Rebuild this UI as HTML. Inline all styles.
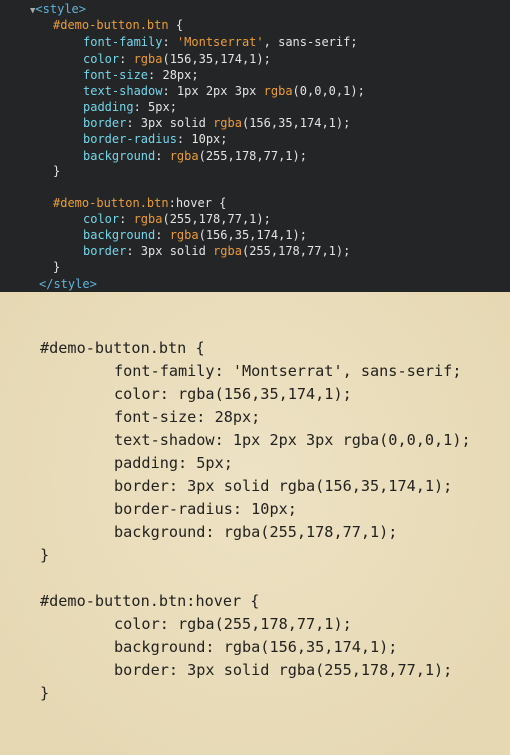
<!DOCTYPE html>
<html><head><style>
body{margin:0;width:510px;height:755px;overflow:hidden;font-family:"DejaVu Sans Mono","Liberation Mono",monospace;}
#top{position:absolute;left:0;top:0;width:510px;height:292px;background:#242526;font-size:12px;}
#bot{position:absolute;left:0;top:292px;width:510px;height:463px;background:radial-gradient(ellipse at 50% 40%,#ede2c4,#e6d8b3 85%);font-size:15.2px;color:#232220;}
.l{position:absolute;white-space:pre;line-height:16px;}
#bot .l{line-height:20px;}
.t{color:#5fb4dc}.s{color:#ea9d3a}.p{color:#74d6ea}.v{color:#e3e3e3}.o{color:#ea9d3a}
</style></head><body>
<div id="top">
<div class="l" style="left:30px;top:1px"><span style="color:#aaa;font-size:9px">▼</span><span class="t">&lt;style&gt;</span></div>
<div class="l s" style="left:53px;top:17px">#demo-button.btn <span class="v">{</span></div>
<div class="l" style="left:83px;top:34px"><span class="p">font-family</span><span class="v">: </span><span class="o">'Montserrat'</span><span class="v">, sans-serif;</span></div>
<div class="l" style="left:83px;top:51px"><span class="p">color</span><span class="v">: </span><span class="o">rgba</span><span class="v">(156,35,174,1);</span></div>
<div class="l" style="left:83px;top:67px"><span class="p">font-size</span><span class="v">: 28px;</span></div>
<div class="l" style="left:83px;top:83px"><span class="p">text-shadow</span><span class="v">: 1px 2px 3px </span><span class="o">rgba</span><span class="v">(0,0,0,1);</span></div>
<div class="l" style="left:83px;top:99px"><span class="p">padding</span><span class="v">: 5px;</span></div>
<div class="l" style="left:83px;top:115px"><span class="p">border</span><span class="v">: 3px solid </span><span class="o">rgba</span><span class="v">(156,35,174,1);</span></div>
<div class="l" style="left:83px;top:131px"><span class="p">border-radius</span><span class="v">: 10px;</span></div>
<div class="l" style="left:83px;top:148px"><span class="p">background</span><span class="v">: </span><span class="o">rgba</span><span class="v">(255,178,77,1);</span></div>
<div class="l v" style="left:53px;top:163px">}</div>
<div class="l s" style="left:53px;top:195px">#demo-button.btn<span class="v">:hover {</span></div>
<div class="l" style="left:83px;top:211px"><span class="p">color</span><span class="v">: </span><span class="o">rgba</span><span class="v">(255,178,77,1);</span></div>
<div class="l" style="left:83px;top:227px"><span class="p">background</span><span class="v">: </span><span class="o">rgba</span><span class="v">(156,35,174,1);</span></div>
<div class="l" style="left:83px;top:243px"><span class="p">border</span><span class="v">: 3px solid </span><span class="o">rgba</span><span class="v">(255,178,77,1);</span></div>
<div class="l v" style="left:53px;top:259px">}</div>
<div class="l t" style="left:39px;top:276px">&lt;/style&gt;</div>
</div>
<div id="bot">
<div class="l" style="left:40px;top:46px">#demo-button.btn {</div>
<div class="l" style="left:114px;top:69px">font-family: 'Montserrat', sans-serif;</div>
<div class="l" style="left:114px;top:92px">color: rgba(156,35,174,1);</div>
<div class="l" style="left:114px;top:115px">font-size: 28px;</div>
<div class="l" style="left:114px;top:138px">text-shadow: 1px 2px 3px rgba(0,0,0,1);</div>
<div class="l" style="left:114px;top:161px">padding: 5px;</div>
<div class="l" style="left:114px;top:184px">border: 3px solid rgba(156,35,174,1);</div>
<div class="l" style="left:114px;top:207px">border-radius: 10px;</div>
<div class="l" style="left:114px;top:230px">background: rgba(255,178,77,1);</div>
<div class="l" style="left:40px;top:253px">}</div>
<div class="l" style="left:40px;top:299px">#demo-button.btn:hover {</div>
<div class="l" style="left:114px;top:322px">color: rgba(255,178,77,1);</div>
<div class="l" style="left:114px;top:345px">background: rgba(156,35,174,1);</div>
<div class="l" style="left:114px;top:368px">border: 3px solid rgba(255,178,77,1);</div>
<div class="l" style="left:40px;top:391px">}</div>
</div>
</body></html>
